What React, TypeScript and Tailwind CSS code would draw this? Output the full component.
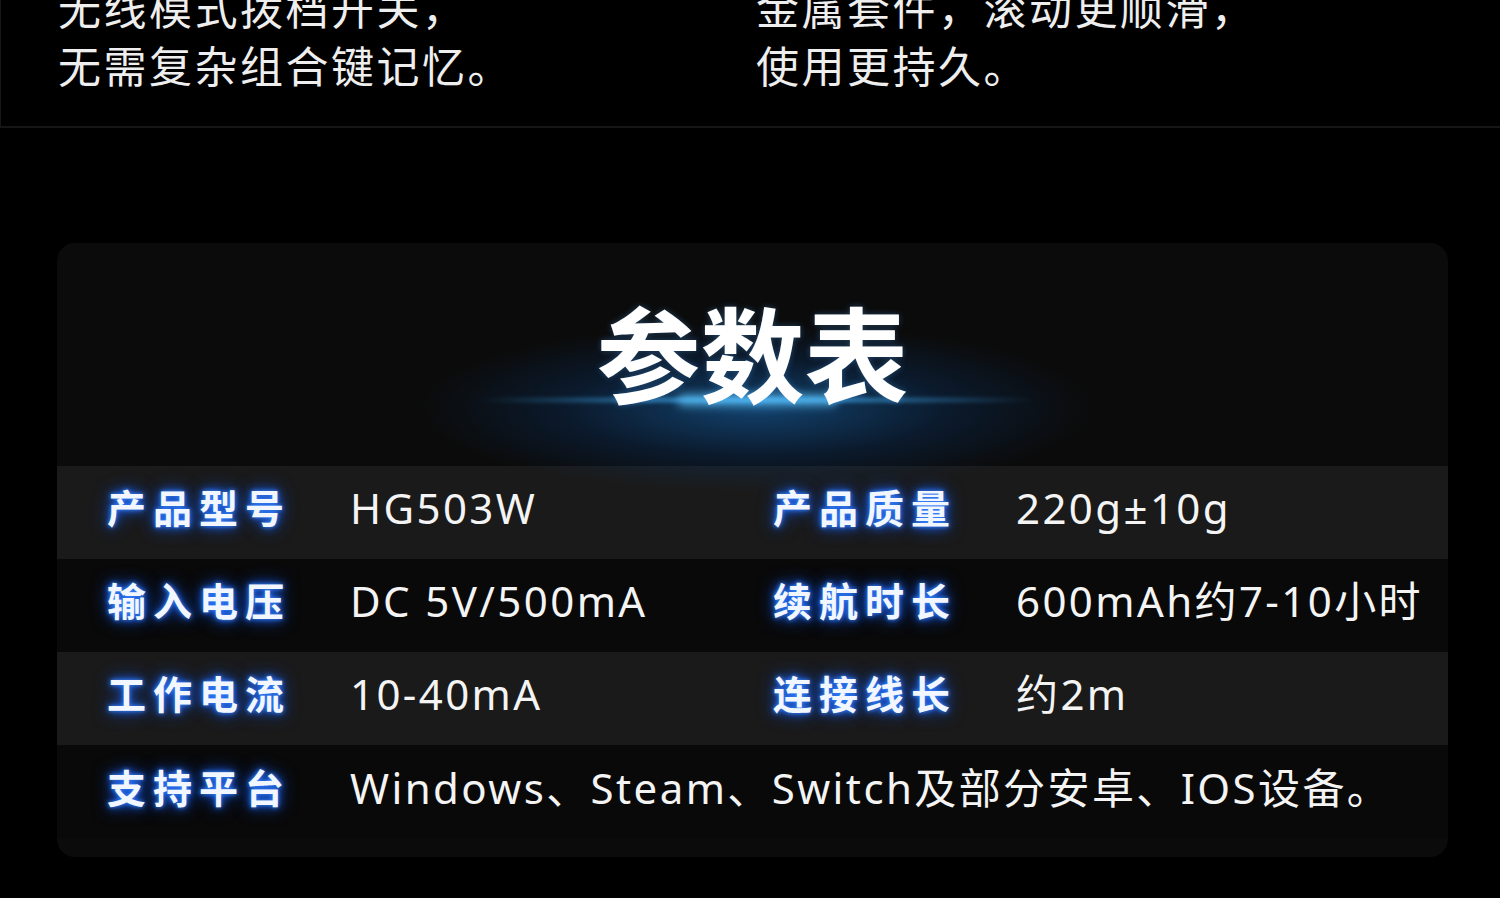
import React from "react";

type Spec = { label: string; value: string };

const rows: Spec[][] = [
  [
    { label: "产品型号", value: "HG503W" },
    { label: "产品质量", value: "220g±10g" },
  ],
  [
    { label: "输入电压", value: "DC 5V/500mA" },
    { label: "续航时长", value: "600mAh约7-10小时" },
  ],
  [
    { label: "工作电流", value: "10-40mA" },
    { label: "连接线长", value: "约2m" },
  ],
];

const font = { fontFamily: '"Noto Sans", "Noto Sans CJK SC", sans-serif' };

/* 发光的蓝色标签 */
const Label = ({ text }: { text: string }) => (
  <div className="text-[39px] font-bold tracking-[7px] text-[#f2f6ff] leading-none [text-shadow:0_0_4px_#3b8bff,0_0_10px_#1d63ff,0_0_18px_#0f4fd6]">
    {text}
  </div>
);

const Value = ({ text }: { text: string }) => (
  <div className="text-[42px] tracking-[2.4px] text-[#f4f4f4] leading-none whitespace-nowrap">{text}</div>
);

export default function App() {
  return (
    <div className="w-[1500px] h-[898px] bg-black overflow-hidden" style={font}>
      {/* 顶部说明 */}
      <div className="h-[128px] border-l border-b-2 border-[#161616] flex flex-col justify-end pb-[30px] overflow-hidden">
        <div className="flex text-[43px] leading-[58px] tracking-[2.5px] text-[#eeeeee]">
          <div className="w-[755px] pl-[57px] shrink-0">
            <div>无线模式拨档开关，</div>
            <div>无需复杂组合键记忆。</div>
          </div>
          <div>
            <div>金属套件，滚动更顺滑，</div>
            <div>使用更持久。</div>
          </div>
        </div>
      </div>

      {/* 参数表 */}
      <div className="mt-[115px] ml-[57px] w-[1391px] h-[614px] rounded-[18px] bg-[#0b0b0b] overflow-hidden flex flex-col">
        <div className="relative h-[223px] flex items-center justify-center">
          <div className="absolute left-[360px] top-[80px] w-[680px] h-[170px] rounded-full bg-[radial-gradient(ellipse_at_center,rgba(24,110,190,0.55)_0%,rgba(10,60,120,0.3)_40%,transparent_70%)]" />
          <div className="absolute left-[420px] top-[155px] w-[560px] h-[4px] blur-[2px] bg-gradient-to-r from-transparent via-[#45b8ff] to-transparent" />
          <div className="absolute left-[620px] top-[151px] w-[160px] h-[12px] blur-[5px] rounded-full bg-[#5cc8ff]/70" />
          <div className="relative text-[104px] font-bold text-white leading-none pt-[2px] [text-shadow:0_0_6px_rgba(80,170,255,0.35)]">
            参数表
          </div>
        </div>

        {rows.map((r, i) => (
          <div
            key={i}
            className={`h-[93px] grid grid-cols-[243px_423px_243px_1fr] items-center pl-[50px] pb-[10px] ${
              i % 2 === 0 ? "bg-[#1a1a1a]" : "bg-[#090909]"
            }`}
          >
            <Label text={r[0].label} />
            <Value text={r[0].value} />
            <Label text={r[1].label} />
            <Value text={r[1].value} />
          </div>
        ))}

        <div className="h-[93px] grid grid-cols-[243px_1fr] items-center pl-[50px] pb-[8px] bg-[#090909]">
          <Label text="支持平台" />
          <Value text="Windows、Steam、Switch及部分安卓、IOS设备。" />
        </div>
      </div>
    </div>
  );
}
